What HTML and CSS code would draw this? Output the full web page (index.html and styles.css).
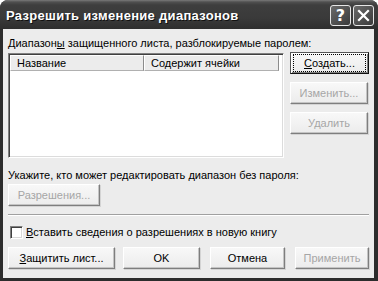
FILE: index.html
```html
<!DOCTYPE html>
<html>
<head>
<meta charset="utf-8">
<link rel="stylesheet" href="styles.css">
</head>
<body>
<div class="window">
  <div class="titlebar">
    <div class="title">Разрешить изменение диапазонов</div>
    <div class="tbtn help">?</div>
    <div class="tbtn close">
      <svg width="13" height="13" viewBox="0 0 13 13"><path d="M2 2L11 11M11 2L2 11" stroke="#fff" stroke-width="2.2" stroke-linecap="square"/></svg>
    </div>
  </div>
  <div class="client">
    <div class="label">Диапазон<u>ы</u> защищенного листа, разблокируемые паролем:</div>
    <div class="ranges">
      <div class="list">
        <div class="list-head">
          <div class="col col-name">Название</div>
          <div class="col col-cells">Содержит ячейки</div>
        </div>
      </div>
      <div class="side">
        <div class="btn default"><span class="focus"><u>С</u>оздать...</span></div>
        <div class="btn disabled">Изменить...</div>
        <div class="btn disabled">Удалить</div>
      </div>
    </div>
    <div class="label label2">Укажите, кто может редактировать диапазон без пароля:</div>
    <div class="btn disabled perm">Разрешения...</div>
    <div class="sep"></div>
    <div class="check-row">
      <div class="checkbox"></div>
      <div class="check-label"><u>В</u>ставить сведения о разрешениях в новую книгу</div>
    </div>
    <div class="bottom">
      <div class="btn protect"><u>З</u>ащитить лист...</div>
      <div class="btn ok">OK</div>
      <div class="btn cancel">Отмена</div>
      <div class="btn disabled apply">Применить</div>
    </div>
  </div>
</div>
</body>
</html>
```
FILE: styles.css
```css
* { box-sizing: border-box; }
html, body { margin: 0; padding: 0; background: #fff; }
body { font-family: "Liberation Sans", Arial, sans-serif; font-size: 11px; color: #000; }
u { text-decoration: underline; text-underline-offset: 1px; }

.window {
  width: 378px; height: 281px;
  background: #2c2c2c;
  border-radius: 8px 8px 0 0;
  display: flex; flex-direction: column;
  overflow: hidden;
}
.titlebar {
  height: 29px; flex: none;
  display: flex; align-items: center;
  padding: 1px 4px 0 6px;
  background: linear-gradient(#7a7a7a 0, #505050 2px, #3e3e3e 5px, #3a3a3a 18px, #2e2e2e 29px);
}
.title {
  flex: 1;
  color: #fff; font-weight: bold; font-size: 13px;
  font-family: "Liberation Sans", Arial, sans-serif;
  letter-spacing: 0.3px;
  text-shadow: 1px 1px 0 #111;
}
.tbtn {
  width: 21px; height: 21px; margin-left: 2px;
  border: 1px solid #e6e6e6; border-radius: 3px;
  background: linear-gradient(135deg, #6a6a6a, #3a3a3a);
  display: flex; align-items: center; justify-content: center;
  color: #fff; font-weight: bold; font-size: 16px;
  font-family: "DejaVu Sans", sans-serif;
}
.client {
  flex: 1;
  margin: 0 4px 3px 3px;
  background: #ececec;
  padding: 8px 5px 0 5px;
  display: flex; flex-direction: column;
}
.label { height: 13px; line-height: 13px; white-space: nowrap; }
.ranges { display: flex; align-items: flex-start; margin-top: 3px; }
.list {
  width: 276px; height: 105px;
  background: #fff;
  border: 1px solid; border-color: #808080 #fff #fff #808080;
  box-shadow: inset 1px 1px 0 #404040, inset -1px -1px 0 #dcdcdc;
  padding: 1px 0 0 1px;
}
.list-head { display: flex; height: 16px; }
.col {
  height: 16px; line-height: 15px;
  padding-left: 6px;
  background: #ececec;
  border: 1px solid; border-color: #fff #8c8c8c #b0b0b0 #fff;
}
.col-name { width: 134px; }
.col-cells { width: 135px; }
.side { margin-left: 6px; margin-top: -1px; display: flex; flex-direction: column; gap: 8px; }
.btn {
  height: 22px; width: 78px;
  border: 1px solid; border-color: #fff #7e7e7e #7e7e7e #fff;
  box-shadow: inset -1px -1px 0 #c4c4c4, 1px 1px 0 #d4d4d4;
  background: linear-gradient(#f8f8f8, #ececec);
  display: flex; align-items: center; justify-content: center;
  white-space: nowrap;
}
.btn.default {
  width: 79px;
  border-color: #555 #111 #111 #555;
  box-shadow: inset 1px 1px 0 #fff, inset -1px -1px 0 #808080;
}
.focus { outline: 1px dotted #000; padding: 1px 5px; outline-offset: 0; width: 71px; height: 16px; line-height: 14px; text-align: center; }
.btn.disabled { color: #a6a6a6; }
.label2 { margin-top: 11px; }
.perm { width: 92px; margin-top: 2px; }
.sep { height: 2px; margin-top: 8px; margin-right: 0; border-top: 1px solid #a0a0a0; border-bottom: 1px solid #fff; }
.check-row { display: flex; align-items: center; margin-top: 9px; height: 14px; }
.checkbox {
  width: 13px; height: 13px; margin-left: 2px;
  background: #fff;
  border: 1px solid; border-color: #808080 #fff #fff #808080;
  box-shadow: inset 1px 1px 0 #404040, inset -1px -1px 0 #d8d8d8;
}
.check-label { margin-left: 3px; line-height: 13px; }
.bottom { display: flex; margin-top: 8px; }
.protect { width: 107px; }
.ok { width: 77px; margin-left: 8px; }
.cancel { width: 75px; margin-left: 10px; }
.apply { width: 74px; margin-left: 10px; }
```
